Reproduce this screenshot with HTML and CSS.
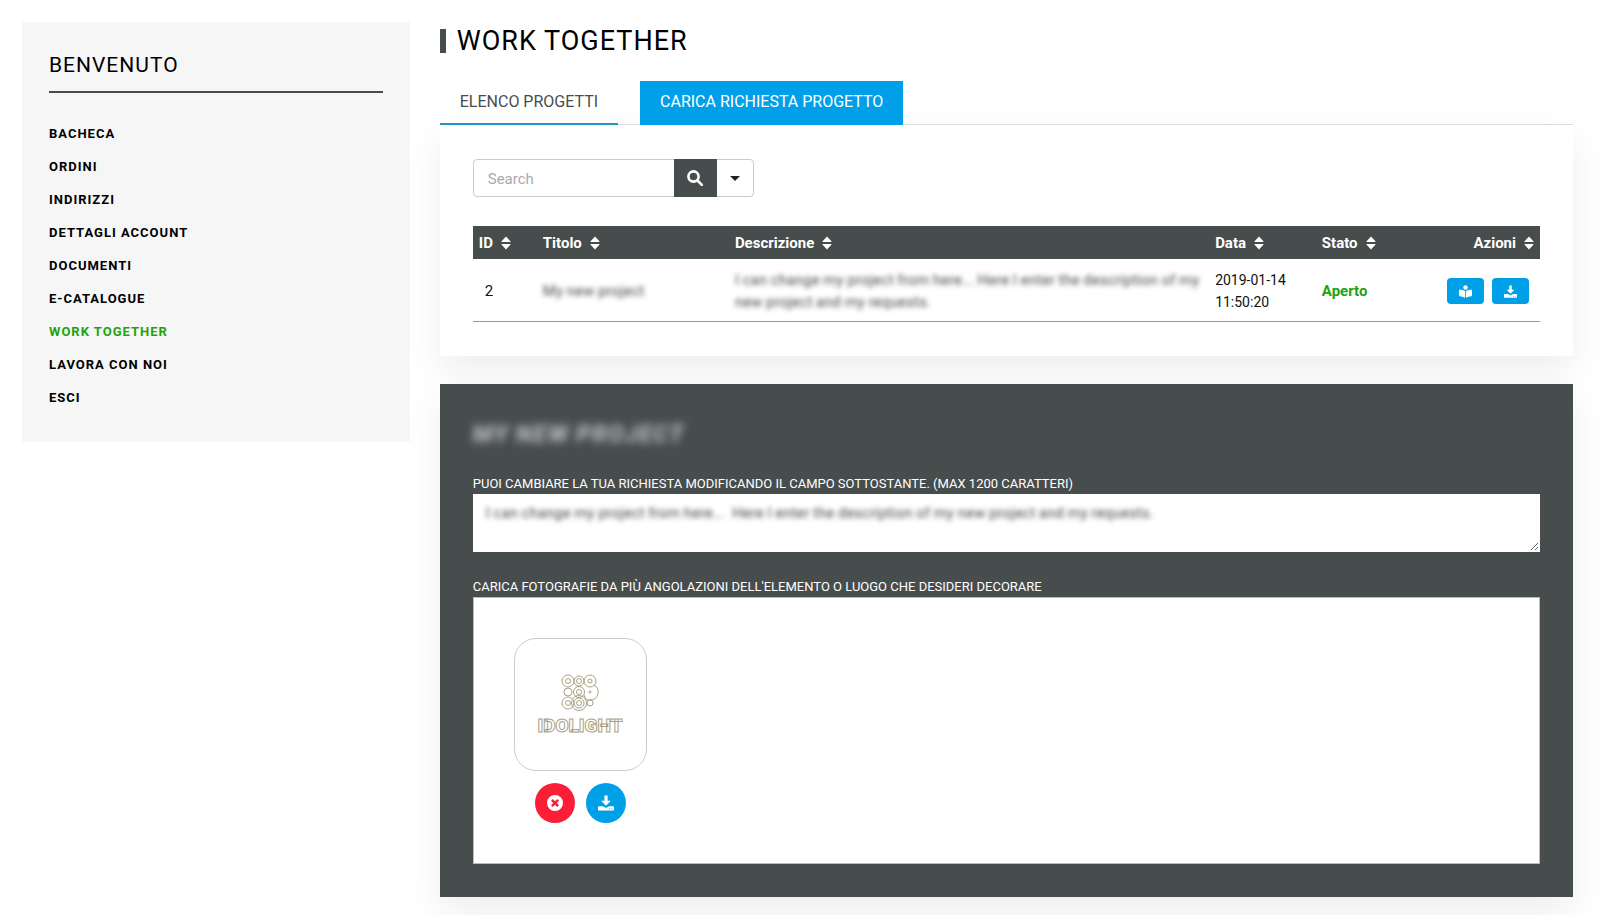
FILE: index.html
```html
<!DOCTYPE html>
<html lang="it">
<head>
    <meta charset="UTF-8">
    <meta name="viewport" content="width=device-width, initial-scale=1.0">
    <title>Work Together</title>
    <link rel="stylesheet" href="styles.css">
</head>
<body>
    <svg class="sprite" aria-hidden="true">
        <symbol id="icon-sort" viewBox="0 0 10 14">
            <path d="M5 0.6 9.4 5.2Q10 6 9 6H1Q0 6 0.6 5.2ZM5 13.4 9.4 8.8Q10 8 9 8H1Q0 8 0.6 8.8Z"/>
        </symbol>
        <symbol id="icon-download" viewBox="0 0 16 16">
            <path d="M6.4 0.5h3.2v5.2h3.2L8 10.7 3.2 5.7h3.2zM0.8 11.2h4.200L8 13l3-1.800h4.200q.8 0 .8.8v2.800q0 .8-.8.8H.8q-.8 0-.8-.8V12q0-.8.8-.8zM11 13.4v.9h1.100v-.9zM13.2 13.4v.9h1.100v-.9z" fill-rule="evenodd"/>
        </symbol>
        <symbol id="icon-reader" viewBox="0 0 16 16">
            <circle cx="8" cy="3" r="2.7"/>
            <path d="M7.5 7.4v8.3Q4.5 14 .8 13.9 0 13.8 0 13V6.3Q0 5.5.8 5.5 4.8 5.6 7.5 7.4zM8.5 7.4v8.3Q11.5 14 15.2 13.9 16 13.8 16 13V6.3Q16 5.5 15.2 5.5 11.2 5.6 8.5 7.4z"/>
        </symbol>
    </svg>

    <div class="account-page">
        <aside class="sidebar">
            <h2 class="sidebar-title">Benvenuto</h2>
            <nav class="sidebar-nav">
                <a href="#">Bacheca</a>
                <a href="#">Ordini</a>
                <a href="#">Indirizzi</a>
                <a href="#">Dettagli account</a>
                <a href="#">Documenti</a>
                <a href="#">E-catalogue</a>
                <a href="#" class="active">Work together</a>
                <a href="#">Lavora con noi</a>
                <a href="#">Esci</a>
            </nav>
        </aside>

        <main class="content">
            <h1 class="page-title">Work together</h1>

            <div class="tabs">
                <a href="#" class="tab">Elenco progetti</a>
                <a href="#" class="tab tab-filled">Carica richiesta progetto</a>
            </div>

            <section class="panel">
                <form class="search-form">
                    <input type="text" class="search-input" placeholder="Search" aria-label="Search">
                    <button type="submit" class="search-button" aria-label="Cerca">
                        <svg viewBox="0 0 16 16"><circle cx="6.5" cy="6.5" r="5.1"/><path d="M10.5 10.5 14.8 14.8"/></svg>
                    </button>
                    <button type="button" class="search-toggle" aria-label="Opzioni"><span class="caret"></span></button>
                </form>

                <table class="projects">
                    <thead>
                        <tr>
                            <th class="col-id">ID<svg class="sort"><use href="#icon-sort"/></svg></th>
                            <th class="col-title">Titolo<svg class="sort"><use href="#icon-sort"/></svg></th>
                            <th class="col-description">Descrizione<svg class="sort"><use href="#icon-sort"/></svg></th>
                            <th class="col-date">Data<svg class="sort"><use href="#icon-sort"/></svg></th>
                            <th class="col-status">Stato<svg class="sort"><use href="#icon-sort"/></svg></th>
                            <th class="col-actions">Azioni<svg class="sort"><use href="#icon-sort"/></svg></th>
                        </tr>
                    </thead>
                    <tbody>
                        <tr>
                            <td class="cell-id">2</td>
                            <td class="blurred">My new project</td>
                            <td class="blurred">I can change my project from here... Here I enter the description of my new project and my requests.</td>
                            <td class="cell-date">2019-01-14 11:50:20</td>
                            <td class="status-open">Aperto</td>
                            <td>
                                <div class="actions">
                                    <button type="button" class="action-button" aria-label="Apri"><svg><use href="#icon-reader"/></svg></button>
                                    <button type="button" class="action-button" aria-label="Scarica"><svg><use href="#icon-download"/></svg></button>
                                </div>
                            </td>
                        </tr>
                    </tbody>
                </table>
            </section>

            <section class="panel panel-dark">
                <h3 class="project-title">My new project</h3>
                <label class="field-label" for="request">Puoi cambiare la tua richiesta modificando il campo sottostante. (max 1200 caratteri)</label>
                <textarea id="request" class="request-field blurred" maxlength="1200">I can change my project from here...  Here I enter the description of my new project and my requests.</textarea>
                <div class="field-label" id="photos-label">Carica fotografie da più angolazioni dell'elemento o luogo che desideri decorare</div>
                <div class="photos" role="group" aria-labelledby="photos-label">
                    <div class="photo">
                        <div class="photo-frame">
                            <svg class="logo" viewBox="0 0 86 62" role="img" aria-label="Idolight">
                                <g class="logo-rings">
                                    <circle cx="31" cy="7" r="6"/><circle cx="31" cy="7" r="2.5"/>
                                    <circle cx="42" cy="7" r="5"/><circle cx="42" cy="7" r="2.5"/>
                                    <circle cx="53" cy="7" r="6"/><circle cx="53" cy="7" r="2"/>
                                    <circle cx="31" cy="18" r="4"/>
                                    <circle cx="42" cy="18" r="5.5"/><circle cx="42" cy="18" r="2.5"/>
                                    <path d="M57 11a8 8 0 0 1-4 15q-5 0-6-5"/><circle cx="53" cy="18" r="1"/>
                                    <circle cx="31" cy="29" r="6"/><circle cx="31" cy="29" r="2.5"/>
                                    <circle cx="42" cy="29" r="7.5"/><circle cx="42" cy="29" r="5"/><circle cx="42" cy="29" r="2.5"/>
                                    <circle cx="53" cy="29" r="3"/>
                                </g>
                                <text class="logo-text" x="43" y="58">IDOLIGHT</text>
                            </svg>
                        </div>
                        <div class="photo-actions">
                            <button type="button" class="round-button round-delete" aria-label="Elimina">
                                <svg viewBox="0 0 16 16"><path d="M8 0a8 8 0 1 0 0 16A8 8 0 0 0 8 0zM5.8 4 8 6.2 10.2 4 12 5.8 9.8 8 12 10.2 10.2 12 8 9.8 5.8 12 4 10.2 6.2 8 4 5.8z" fill-rule="evenodd"/></svg>
                            </button>
                            <button type="button" class="round-button" aria-label="Scarica"><svg><use href="#icon-download"/></svg></button>
                        </div>
                    </div>
                </div>
            </section>
        </main>
    </div>
</body>
</html>
```
FILE: styles.css
```css
* {
    box-sizing: border-box;
}
body {
    margin: 0;
    background-color: #fff;
    color: #111;
    font-family: Roboto, "Liberation Sans", sans-serif;
    font-size: 15px;
    line-height: 22px;
}
a {
    text-decoration: none;
}
button {
    display: flex;
    align-items: center;
    justify-content: center;
    padding: 0;
    border: none;
    cursor: pointer;
}
svg {
    fill: currentColor;
}
.sprite {
    position: absolute;
    width: 0;
    height: 0;
}
.account-page {
    display: flex;
    align-items: flex-start;
    gap: 30px;
    padding: 22px 27px 18px 22px;
}

/* Sidebar */
.sidebar {
    flex: 0 0 25%;
    padding: 27px 27px 28px;
    background-color: #f6f6f6;
}
.sidebar-title {
    margin: 0 0 24px;
    padding-bottom: 9px;
    border-bottom: 2px solid #474d4d;
    color: #000;
    font-size: 21px;
    font-weight: 400;
    line-height: 33px;
    letter-spacing: 1px;
    text-transform: uppercase;
}
.sidebar-nav {
    display: flex;
    flex-direction: column;
}
.sidebar-nav a {
    color: #000;
    font-size: 13px;
    font-weight: 700;
    line-height: 33px;
    letter-spacing: 1px;
    text-transform: uppercase;
}
.sidebar-nav .active {
    color: #1fa30c;
}

/* Content */
.content {
    flex: 1;
    min-width: 0;
}
.page-title {
    margin: 7px 0 28px;
    padding-left: 11px;
    border-left: 6px solid #474d4d;
    color: #000;
    font-size: 27px;
    font-weight: 400;
    line-height: 24px;
    letter-spacing: 1px;
    text-transform: uppercase;
}
.tabs {
    display: flex;
    gap: 22px;
    border-bottom: 1px solid #ddd;
}
.tab {
    margin-bottom: -1px;
    padding: 0 20px;
    border-bottom: 2px solid #2196c9;
    color: #474d4d;
    font-size: 16px;
    line-height: 42px;
    text-transform: uppercase;
}
.tab-filled {
    border-color: #00a0e9;
    background-color: #00a0e9;
    color: #fff;
}
.panel {
    padding: 34px 33px;
    background-color: #fff;
    box-shadow: 0 15px 35px rgba(0, 0, 0, 0.07);
}

/* Search */
.search-form {
    display: flex;
    width: 281px;
    height: 38px;
    margin-bottom: 29px;
    border: 1px solid #ccc;
    border-radius: 4px;
}
.search-input {
    flex: 1;
    min-width: 0;
    padding: 2px 14px 0;
    border: none;
    outline: none;
    background: none;
    font: inherit;
}
.search-input::placeholder {
    color: #aaa;
}
.search-button {
    width: 43px;
    margin: -1px 0;
    background-color: #474d4d;
    color: #fff;
}
.search-button svg {
    width: 16px;
    height: 16px;
    fill: none;
    stroke: currentColor;
    stroke-width: 2.6;
    stroke-linecap: round;
}
.search-toggle {
    width: 36px;
    background: none;
}
.caret {
    border: 5px solid transparent;
    border-top-color: #222;
    border-bottom: none;
}

/* Projects table */
.projects {
    width: 100%;
    border-collapse: collapse;
    table-layout: fixed;
}
.projects th {
    padding: 1px 6px 0;
    background-color: #474d4d;
    color: #fff;
    font-weight: 700;
    line-height: 32px;
    text-align: left;
    white-space: nowrap;
}
.projects td {
    padding: 10px 6px 8px;
    border-bottom: 1px solid #999;
}
.col-id {
    width: 6%;
}
.col-title {
    width: 18%;
}
.col-description {
    width: 45%;
}
.col-date {
    width: 10%;
}
.col-status {
    width: 8%;
}
.projects .col-actions {
    text-align: right;
}
.projects .cell-id {
    padding-left: 12px;
}
.cell-date {
    font-size: 14px;
}
.sort {
    width: 10px;
    height: 14px;
    margin-left: 8px;
    vertical-align: -2px;
}
.blurred {
    color: transparent;
    text-shadow: 0 0 5px rgba(0, 0, 0, 0.7);
}
.status-open {
    color: #1fa30c;
    font-weight: 700;
}
.actions {
    display: flex;
    justify-content: flex-end;
    gap: 8px;
    padding-right: 5px;
}
.action-button {
    width: 37px;
    height: 26px;
    border-radius: 4px;
    background-color: #00a0e9;
    color: #fff;
}
.action-button svg {
    width: 13px;
    height: 13px;
}

/* Project details */
.panel-dark {
    margin-top: 28px;
    padding-bottom: 33px;
    background-color: #474d4d;
    color: #fff;
}
.project-title {
    margin: 0 0 24px;
    color: transparent;
    font-size: 24px;
    font-style: italic;
    font-weight: 700;
    line-height: 32px;
    letter-spacing: 1px;
    text-shadow: 0 0 8px rgba(255, 255, 255, 0.7);
    text-transform: uppercase;
}
.field-label {
    display: block;
    font-size: 13px;
    line-height: 20px;
    text-transform: uppercase;
}
.request-field {
    display: block;
    width: 100%;
    height: 58px;
    margin-bottom: 25px;
    padding: 7px 12px;
    border: 1px solid #fff;
    border-radius: 0;
    background-color: #fff;
    font: inherit;
    resize: vertical;
}
.photos {
    display: flex;
    padding: 40px;
    border: 1px solid #bbb;
    background-color: #fff;
}
.photo-frame {
    display: flex;
    align-items: center;
    justify-content: center;
    width: 133px;
    height: 133px;
    border: 1px solid #ccc;
    border-radius: 22px;
}
.logo {
    width: 86px;
    height: 62px;
}
.logo-rings {
    fill: none;
    stroke: #a9a283;
}
.logo-text {
    fill: #fff;
    stroke: #a9a283;
    font-size: 19px;
    font-weight: 900;
    text-anchor: middle;
}
.photo-actions {
    display: flex;
    justify-content: center;
    gap: 11px;
    margin-top: 12px;
}
.round-button {
    width: 40px;
    height: 40px;
    border-radius: 50%;
    background-color: #00a0e9;
    color: #fff;
}
.round-button svg {
    width: 16px;
    height: 16px;
}
.round-delete {
    background-color: #fa1e37;
}
```
